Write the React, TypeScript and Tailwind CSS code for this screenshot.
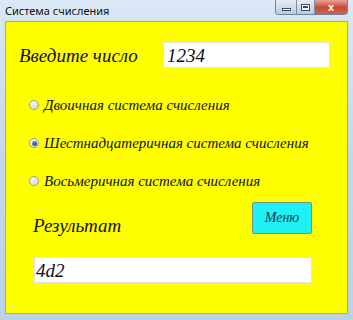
import React from "react";

const serif = { fontFamily: '"Liberation Serif", "Times New Roman", serif' };

function Radio({ checked, label }: { checked?: boolean; label: string }) {
  return (
    <div className="flex items-center h-[20px] ml-[23px]">
      <div className="w-[10px] h-[10px] rounded-full border border-[#9a9a9a] bg-gradient-to-br from-[#ffffff] to-[#d4d4d4] flex items-center justify-center">
        {checked && <div className="w-[5px] h-[5px] rounded-full bg-gradient-to-br from-[#6a9ad8] to-[#173f7a]" />}
      </div>
      <span className="ml-[5px] text-[15px] italic text-[#111] leading-none" style={serif}>
        {label}
      </span>
    </div>
  );
}

export default function App() {
  return (
    <div className="w-[353px] h-[320px] bg-gradient-to-b from-[#dbe8f5] via-[#c3d7ec] to-[#bcd2ea] flex flex-col overflow-hidden">
      <div className="h-[21px] flex items-start relative">
        <span
          className="ml-[5px] mt-[5px] text-[11px] text-[#111] leading-none"
          style={{ fontFamily: '"Noto Sans", "Liberation Sans", sans-serif' }}
        >
          Система счисления
        </span>
        <div className="ml-auto mr-[5px] flex h-[15px] rounded-b-[4px] border border-t-0 border-[#6f8299] overflow-hidden">
          <div className="w-[21px] h-full bg-gradient-to-b from-[#e6eef7] to-[#b9cbe0] border-r border-[#7e90a6] flex items-center justify-center">
            <div className="w-[9px] h-[3px] mt-[4px] bg-white border border-[#3a4a60]" />
          </div>
          <div className="w-[18px] h-full bg-gradient-to-b from-[#e6eef7] to-[#b9cbe0] border-r border-[#7e90a6] flex items-center justify-center">
            <div className="w-[9px] h-[7px] border border-[#3a4a60] bg-white flex items-center justify-center">
              <div className="w-[5px] h-[2px] border border-[#3a4a60]" />
            </div>
          </div>
          <div className="w-[32px] h-full bg-gradient-to-b from-[#e8a598] via-[#c8493a] to-[#d0604a] flex items-center justify-center">
            <span className="text-white text-[11px] font-bold leading-none" style={{ fontFamily: '"Liberation Sans", sans-serif' }}>
              x
            </span>
          </div>
        </div>
      </div>
      <div className="ml-[5px] w-[343px] h-[293px] bg-[#ffff00] border border-[#9aa9b8] flex flex-col">
        <div className="flex items-center h-[26px] mt-[20px]">
          <span className="ml-[13px] w-[144px] text-[19px] italic text-[#111] leading-none" style={serif}>
            Введите число
          </span>
          <div className="w-[167px] h-[26px] bg-white border border-[#e2e2e2] flex items-center pl-[3px]">
            <span className="text-[19px] italic text-[#111] leading-none" style={serif}>
              1234
            </span>
          </div>
        </div>
        <div className="flex flex-col gap-[18px] mt-[27px]">
          <Radio label="Двоичная система счисления" />
          <Radio checked label="Шестнадцатеричная система счисления" />
          <Radio label="Восьмеричная система счисления" />
        </div>
        <div className="flex items-start mt-[11px]">
          <span className="ml-[27px] mt-[12px] text-[19px] italic text-[#111] leading-[24px]" style={serif}>
            Результат
          </span>
          <div className="ml-auto mr-[35px] w-[60px] h-[32px] bg-[#1ff0f6] border border-[#7a8f86] rounded-[2px] flex items-center justify-center">
            <span className="text-[14px] italic text-[#123a4a] leading-none" style={serif}>
              Меню
            </span>
          </div>
        </div>
        <div className="ml-[28px] mt-[19px] w-[278px] h-[26px] bg-white border border-[#e2e2e2] flex items-center pl-[1px]">
          <span className="text-[19px] italic text-[#111] leading-none" style={serif}>
            4d2
          </span>
        </div>
      </div>
    </div>
  );
}
